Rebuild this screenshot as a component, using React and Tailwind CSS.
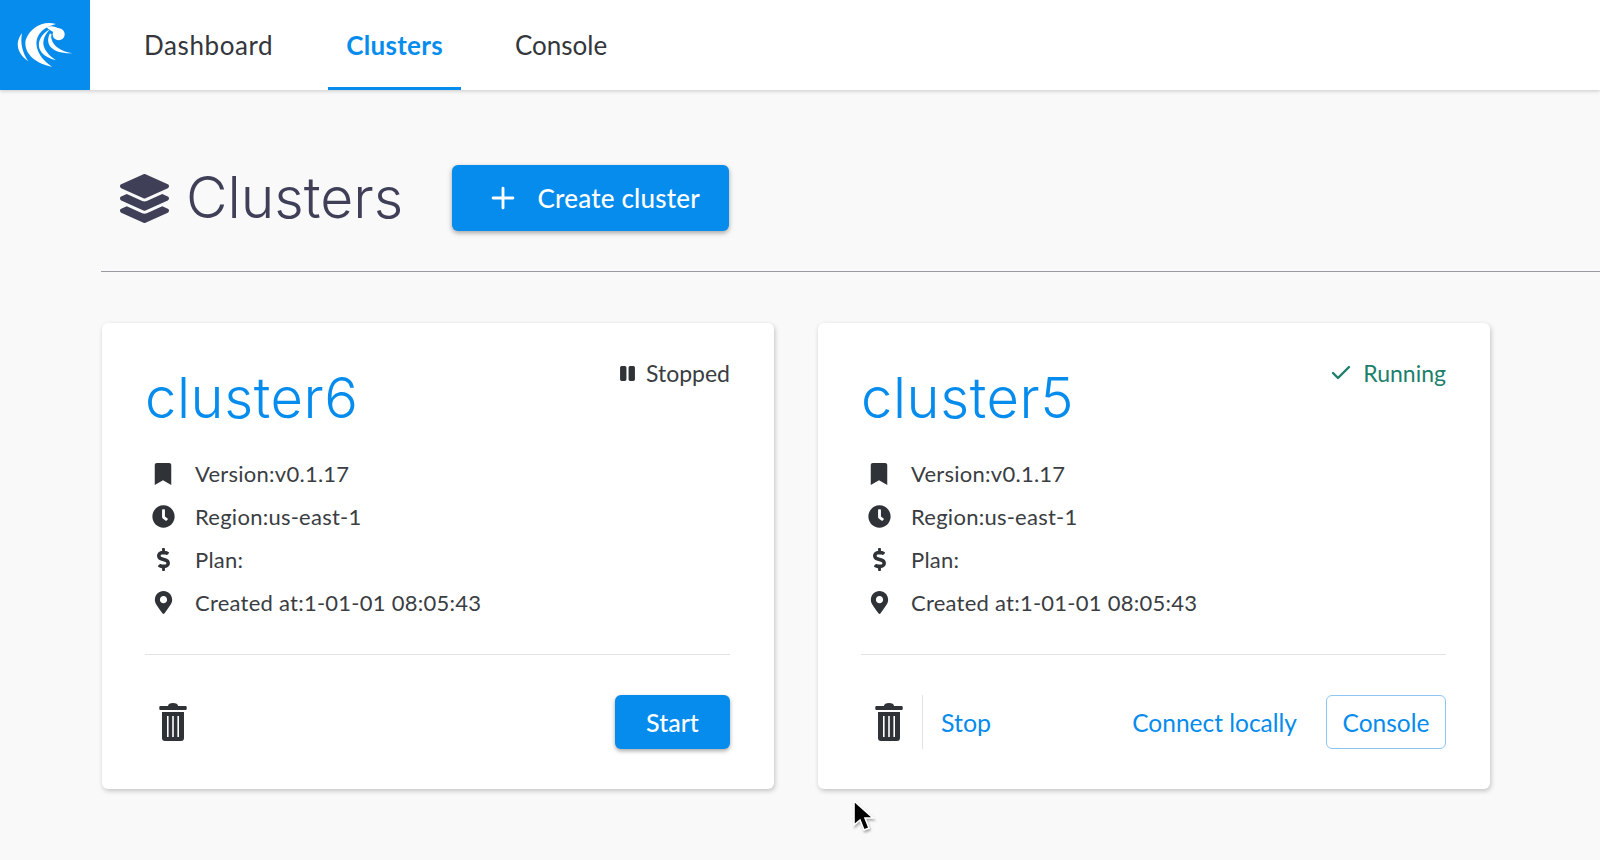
import React from 'react';
import { FaLayerGroup, FaBookmark, FaClock, FaDollarSign, FaMapMarkerAlt, FaPause } from 'react-icons/fa';
import { Check, Plus } from 'lucide-react';

const Logo = () => (
  <svg viewBox="0 0 270 270" className="w-[90px] h-[90px]" fill="#fff">
    <path d="M66 100 C46 125 48 158 85 184 C68 160 60 130 66 100Z" />
    <path d="M168 72 C130 60 90 82 77 120 C70 155 100 190 156 200 C125 180 105 150 110 120 C116 95 140 78 168 72Z" />
    <path d="M150 88 C125 100 112 125 118 145 C125 165 145 175 168 181 C145 165 128 145 130 125 C132 110 140 98 150 88Z" />
    <path d="M150 100 C135 128 148 162 218 160 C185 155 160 140 155 118 C153 112 153 108 155 104Z" />
    <circle cx="176" cy="103" r="18" />
    <path d="M140 82 C150 76 165 78 178 86 L160 96 C152 92 146 88 140 82Z" />
  </svg>
);

const Trash = () => (
  <svg viewBox="0 0 28 40" className="w-[28px] h-[40px]" fill="#2f3237">
    <path d="M9 4 C9 2 11 1 14 1 C17 1 19 2 19 4 L27 4 C28 4 28 8 27 8 L1 8 C0 8 0 4 1 4Z" />
    <path fillRule="evenodd" d="M3 10 H25 V36 C25 38 24 39 22 39 H6 C4 39 3 38 3 36Z M8 14 V35 H9.6 V14Z M13.2 14 V35 H14.8 V14Z M18.4 14 V35 H20 V14Z" />
  </svg>
);

const Row = ({ icon, children }) => (
  <div className="flex items-center h-[43px]">
    <span className="w-[34px] flex justify-center text-[#2f3237] text-[23px] shrink-0">{icon}</span>
    <span className="ml-[15px] text-[22px] text-[#3a3d42] tracking-[0.25px]">{children}</span>
  </div>
);

const Card = ({ name, status, actions, stopDivider }) => (
  <div className="w-[672px] h-[466px] bg-white rounded-[6px] shadow-[1px_2px_5px_rgba(0,0,0,0.22)] px-[44px] pt-[30px] flex flex-col">
    <div className="flex justify-between items-start">
      <h2 className="text-[56px] leading-[70px] font-light text-[#068ced] font-['Inter',sans-serif] mt-[10px] -ml-[1px] tracking-[0.6px]">{name}</h2>
      {status}
    </div>
    <div className="mt-[19px]">
      <Row icon={<FaBookmark className="text-[22px]" />}>Version:v0.1.17</Row>
      <Row icon={<FaClock />}>Region:us-east-1</Row>
      <Row icon={<FaDollarSign />}>Plan:</Row>
      <Row icon={<FaMapMarkerAlt />}>Created at:1-01-01 08:05:43</Row>
    </div>
    <div className="h-px bg-[#e2e2e4] mt-[30px] -ml-[1px]" />
    <div className="flex items-center mt-[40px] h-[54px]">
      <span className="ml-[13px]"><Trash /></span>
      {stopDivider}
      <div className="ml-auto flex items-center">{actions}</div>
    </div>
  </div>
);

export default function App() {
  return (
    <div className="relative w-[1600px] h-[860px] bg-[#f9f9f9] overflow-hidden font-['Lato','Noto_Sans',sans-serif]">
      <nav className="h-[90px] bg-white flex shadow-[0_1px_4px_rgba(0,0,0,0.2)]">
        <div className="w-[90px] h-[90px] bg-[#068ced]"><Logo /></div>
        <a className="ml-[54px] h-[90px] flex items-center text-[26px] text-[#33363b] tracking-[0.6px]">Dashboard</a>
        <a className="ml-[55px] px-[18px] pt-[3px] h-[90px] flex items-center text-[26px] font-bold text-[#068ced] tracking-[0.3px] border-b-[3px] border-[#068ced]">Clusters</a>
        <a className="ml-[54px] h-[90px] flex items-center text-[26px] text-[#33363b]">Console</a>
      </nav>

      <main className="pl-[101px]">
        <div className="flex items-center pl-[19px] pt-[75px]">
          <FaLayerGroup className="text-[#3f3f58] text-[49px]" />
          <h1 className="ml-[17px] text-[57px] leading-[66px] font-light text-[#3f3f58] font-['Inter',sans-serif]">Clusters</h1>
          <button className="ml-[49px] w-[277px] h-[66px] pl-[4px] rounded-[6px] bg-[#068ced] text-white text-[26px] tracking-[0.2px] font-medium flex items-center justify-center gap-[18px] shadow-[0_2px_5px_rgba(0,0,0,0.35)]">
            <Plus className="w-[34px] h-[34px]" strokeWidth={2} /> Create cluster
          </button>
        </div>
        <div className="h-px bg-[#9a9aa3] mt-[40px]" />

        <div className="flex gap-[44px] pl-px mt-[51px]">
          <Card
            name="cluster6"
            status={
              <div className="flex items-center mt-[3px] text-[23px] text-[#3a3d42]">
                <FaPause className="text-[17px] text-[#2f3237] mr-[10px]" /> Stopped
              </div>
            }
            actions={
              <button className="w-[115px] h-[54px] pt-[1px] rounded-[6px] bg-[#068ced] text-white text-[25px] font-medium shadow-[0_2px_4px_rgba(0,0,0,0.35)]">Start</button>
            }
          />
          <Card
            name="cluster5"
            status={
              <div className="flex items-center mt-[3px] text-[23px] text-[#1c7f6c]">
                <Check className="w-[24px] h-[24px] mr-[10px]" strokeWidth={2.4} /> Running
              </div>
            }
            stopDivider={
              <>
                <div className="w-px h-[54px] bg-[#e2e2e4] ml-[19px]" />
                <span className="ml-[18px] pt-[1px] text-[25px] text-[#068ced]">Stop</span>
              </>
            }
            actions={
              <>
                <span className="pt-[2px] text-[24.5px] text-[#068ced]">Connect locally</span>
                <button className="ml-[29px] w-[120px] h-[54px] pt-[2px] rounded-[6px] border border-[#8cc6f2] text-[24.5px] text-[#068ced]">Console</button>
              </>
            }
          />
        </div>
      </main>

      {/* mouse pointer */}
      <svg viewBox="0 0 24 36" className="absolute left-[852px] top-[800px] w-[24px] h-[36px] drop-shadow-[1px_2px_1px_rgba(0,0,0,0.3)]">
        <path d="M2 1 L2 25 L8 20 L12 30 L17 28 L13 18 L21 18Z" fill="#000" stroke="#fff" strokeWidth="1.6" />
      </svg>
    </div>
  );
}
